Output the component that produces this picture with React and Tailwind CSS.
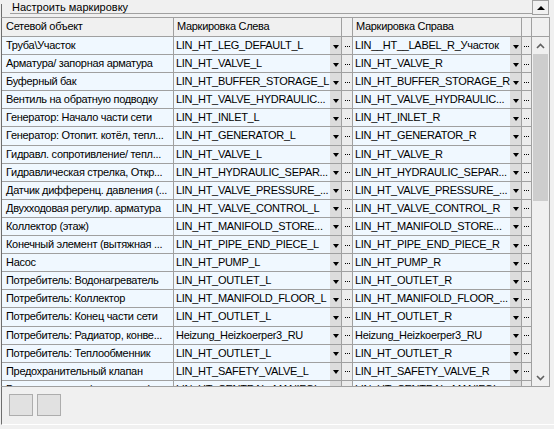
import React from "react";

// Марк-таблица: сетевой объект, маркировка слева / справа
const rows = [
  ["Труба\\Участок", "LIN_HT_LEG_DEFAULT_L", "LIN__HT__LABEL_R_Участок"],
  ["Арматура/ запорная арматура", "LIN_HT_VALVE_L", "LIN_HT_VALVE_R"],
  ["Буферный бак", "LIN_HT_BUFFER_STORAGE_L", "LIN_HT_BUFFER_STORAGE_R"],
  ["Вентиль на обратную подводку", "LIN_HT_VALVE_HYDRAULIC...", "LIN_HT_VALVE_HYDRAULIC..."],
  ["Генератор: Начало части сети", "LIN_HT_INLET_L", "LIN_HT_INLET_R"],
  ["Генератор: Отопит. котёл, тепл...", "LIN_HT_GENERATOR_L", "LIN_HT_GENERATOR_R"],
  ["Гидравл. сопротивление/ тепл...", "LIN_HT_VALVE_L", "LIN_HT_VALVE_R"],
  ["Гидравлическая стрелка, Откр...", "LIN_HT_HYDRAULIC_SEPAR...", "LIN_HT_HYDRAULIC_SEPAR..."],
  ["Датчик дифференц. давления (...", "LIN_HT_VALVE_PRESSURE_...", "LIN_HT_VALVE_PRESSURE_..."],
  ["Двухходовая регулир. арматура", "LIN_HT_VALVE_CONTROL_L", "LIN_HT_VALVE_CONTROL_R"],
  ["Коллектор (этаж)", "LIN_HT_MANIFOLD_STORE...", "LIN_HT_MANIFOLD_STORE..."],
  ["Конечный элемент (вытяжная ...", "LIN_HT_PIPE_END_PIECE_L", "LIN_HT_PIPE_END_PIECE_R"],
  ["Насос", "LIN_HT_PUMP_L", "LIN_HT_PUMP_R"],
  ["Потребитель: Водонагреватель", "LIN_HT_OUTLET_L", "LIN_HT_OUTLET_R"],
  ["Потребитель: Коллектор", "LIN_HT_MANIFOLD_FLOOR_L", "LIN_HT_MANIFOLD_FLOOR_..."],
  ["Потребитель: Конец части сети", "LIN_HT_OUTLET_L", "LIN_HT_OUTLET_R"],
  ["Потребитель: Радиатор, конве...", "Heizung_Heizkoerper3_RU", "Heizung_Heizkoerper3_RU"],
  ["Потребитель: Теплообменник", "LIN_HT_OUTLET_L", "LIN_HT_OUTLET_R"],
  ["Предохранительный клапан", "LIN_HT_SAFETY_VALVE_L", "LIN_HT_SAFETY_VALVE_R"],
  ["Распределитель / коллектор (...", "LIN_HT_CENTRAL_MANIFOL...", "LIN_HT_CENTRAL_MANIFOL..."],
];

function DropArrow() {
  return (
    <div className="h-full w-[12px] shrink-0 bg-[#dcdcdc] border-r border-[#a0a0a0] flex items-center justify-center pt-[2px]">
      <div className="w-0 h-0 border-l-[3.5px] border-r-[3.5px] border-t-[4px] border-l-transparent border-r-transparent border-t-black" />
    </div>
  );
}

function Dots({ w }) {
  return (
    <div className={`h-full shrink-0 bg-[#ececec] border-r border-[#a0a0a0] flex items-center justify-center gap-[1px] pt-[1px] ${w}`}>
      <span className="w-[1px] h-[1px] bg-black" />
      <span className="w-[1px] h-[1px] bg-black" />
      <span className="w-[1px] h-[1px] bg-black" />
    </div>
  );
}

function Chevron({ up }) {
  return (
    <svg width="9" height="6" viewBox="0 0 9 6">
      <polyline
        points={up ? "1,5 4.5,1.5 8,5" : "1,1 4.5,4.5 8,1"}
        fill="none"
        stroke="#606060"
        strokeWidth="1.6"
      />
    </svg>
  );
}

export default function App() {
  return (
    <div className="w-[554px] h-[429px] bg-[#f0f0f0] flex flex-col text-[11px] text-black font-['Liberation_Sans',Arial,sans-serif]">
      {/* заголовок группы */}
      <div className="flex h-[15px] shrink-0">
        <div className="ml-[1px] mt-[4px] w-[9px] border-l border-[#6e6e6e]" />
        <div className="w-[522px] h-[14px] border-b border-[#a0a0a0] pl-[2px] leading-[14px] whitespace-nowrap">
          Настроить маркировку
        </div>
        <div className="w-[17px] h-[15px] border border-[#a0a0a0] flex items-center justify-center">
          <div className="w-0 h-0 border-l-[4px] border-r-[4px] border-b-[4px] border-l-transparent border-r-transparent border-b-black" />
        </div>
      </div>
      <div className="ml-[1px] h-[2px] shrink-0 border-l border-[#6e6e6e]" />

      {/* таблица */}
      <div className="ml-[1px] w-[549px] h-[370px] shrink-0 border-l border-l-[#6e6e6e] border-t border-r border-b border-[#a0a0a0] flex flex-col overflow-hidden tracking-[-0.3px]">
        <div className="flex h-[19px] shrink-0 border-b border-[#a0a0a0] leading-[17px]">
          <div className="w-[172px] border-r border-[#a0a0a0] pl-[4px]">Сетевой объект</div>
          <div className="w-[168px] border-r border-[#a0a0a0] pl-[3px]">Маркировка Слева</div>
          <div className="w-[11px] border-r border-[#a0a0a0]" />
          <div className="w-[169px] border-r border-[#a0a0a0] pl-[3px]">Маркировка Справа</div>
          <div className="w-[10px] border-r border-[#a0a0a0]" />
          <div className="flex-1" />
        </div>

        <div className="flex flex-1 overflow-hidden">
          <div className="w-[530px] flex flex-col">
            {rows.map((r, i) => (
              <div key={i} className="flex h-[18.1px] shrink-0 border-b border-[#a0a0a0] bg-[#f0f8ff] leading-[16px]">
                <div className="w-[172px] shrink-0 border-r border-[#a0a0a0] pl-[4px] whitespace-nowrap overflow-hidden">
                  {r[0]}
                </div>
                <div className="w-[156px] shrink-0 pl-[2px] whitespace-nowrap overflow-hidden">{r[1]}</div>
                <DropArrow />
                <Dots w="w-[11px]" />
                <div className="w-[157px] shrink-0 pl-[2px] whitespace-nowrap overflow-hidden">{r[2]}</div>
                <DropArrow />
                <Dots w="w-[10px]" />
              </div>
            ))}
          </div>

          {/* вертикальная прокрутка */}
          <div className="w-[17px] flex flex-col bg-[#f0f0f0]">
            <div className="h-[17px] shrink-0 flex items-center justify-center">
              <Chevron up />
            </div>
            <div className="mx-[1px] h-[147px] shrink-0 bg-[#cdcdcd]" />
            <div className="flex-1" />
            <div className="h-[17px] shrink-0 flex items-center justify-center">
              <Chevron />
            </div>
          </div>
        </div>
      </div>

      {/* панель кнопок */}
      <div className="ml-[1px] h-[38px] shrink-0 border-l border-[#6e6e6e] border-b border-b-white flex items-start gap-[4px] pl-[7px] pt-[7px]">
        <button className="w-[24px] h-[22px] border border-[#adadad] bg-[#e1e1e1]" />
        <button className="w-[24px] h-[22px] border border-[#adadad] bg-[#e1e1e1]" />
      </div>
    </div>
  );
}
